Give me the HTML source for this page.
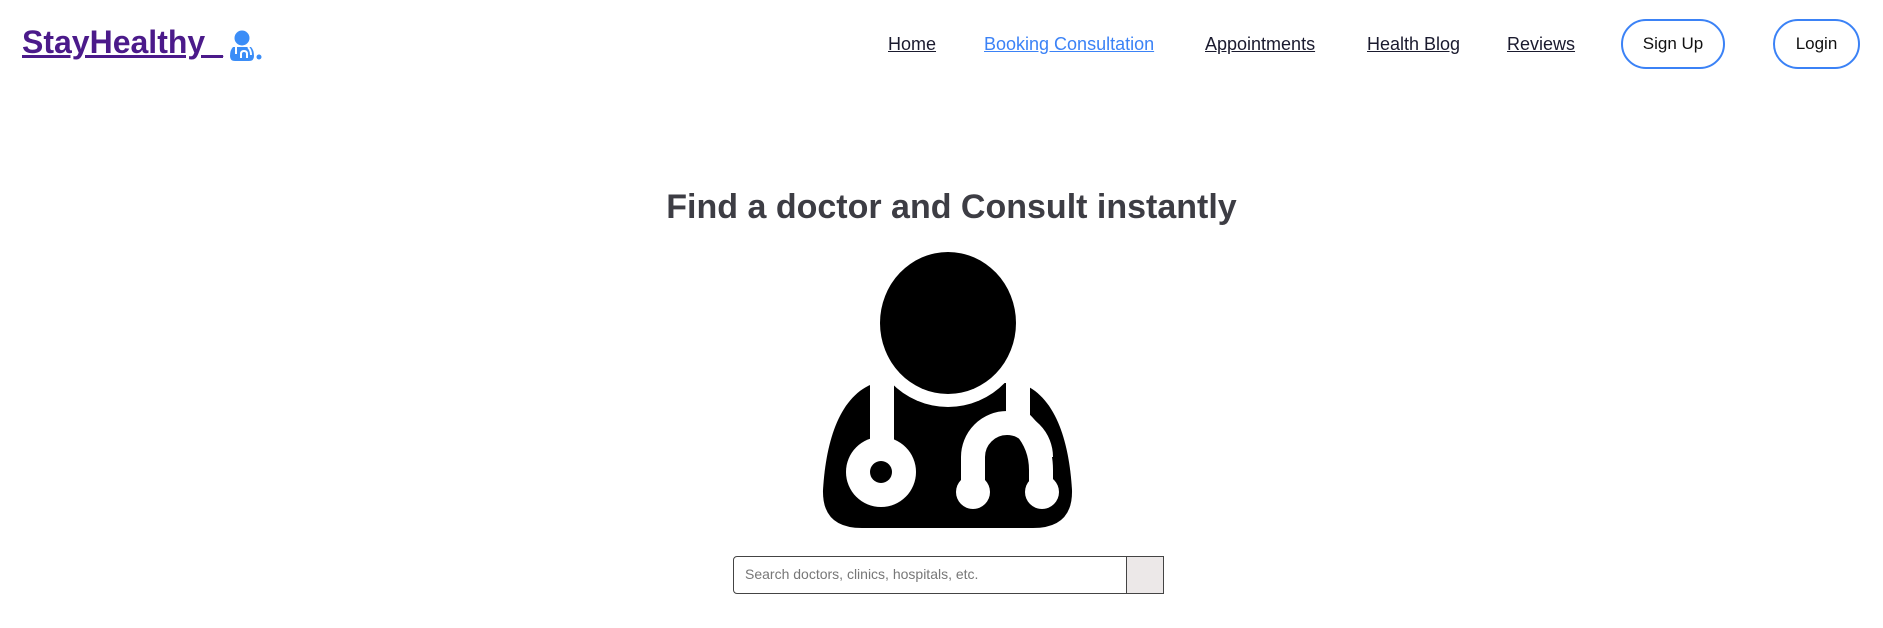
<!DOCTYPE html>
<html><head><meta charset="utf-8"><style>
body{margin:0;width:1883px;height:628px;background:#fff;font-family:"Liberation Sans",sans-serif;position:relative;overflow:hidden}
a{position:absolute;text-decoration:underline;color:#1a1a2e;font-size:18px;white-space:nowrap}
.logo{left:22px;top:24px;font-size:32px;color:#4b1a8a;font-weight:bold;letter-spacing:0px}
.btn{position:absolute;top:19px;height:50px;border:2px solid #3b82f6;border-radius:26px;box-sizing:border-box;font-size:17px;color:#111;display:flex;align-items:center;justify-content:center}
h1{position:absolute;left:10px;width:1883px;top:188px;margin:0;text-align:center;font-size:34px;color:#3d3d44;font-weight:bold}
.inp{position:absolute;left:733px;top:556px;width:394px;height:38px;border:1.5px solid #444;border-radius:4px 0 0 4px;box-sizing:border-box;font-size:14px;color:#777;padding-left:11px;line-height:35px}
.sb{position:absolute;left:1126px;top:556px;width:38px;height:38px;border:1.5px solid #444;background:#ece8e8;box-sizing:border-box}
</style></head><body>
<a class="logo">StayHealthy_</a>
<svg style="position:absolute;left:228px;top:30px" width="34" height="32" viewBox="0 0 34 32">
<circle cx="14" cy="8" r="7.5" fill="#3b8df7"/>
<path d="M5,17 Q2,20 2,26 Q2,31 7,31 L21,31 Q26,31 26,26 Q26,20 23,17 Z" fill="#3b8df7"/>
<path d="M8,17 L8,24 M20,17 Q23,20 23,25 M13,28 L13,24 Q13,21 16,21 Q19,21 19,24 L19,28" stroke="#fff" stroke-width="2" fill="none"/>
<circle cx="31" cy="27" r="2.5" fill="#3b8df7"/>
</svg>
<a style="left:888px;top:34px">Home</a>
<a style="left:984px;top:34px;color:#3b82f6">Booking Consultation</a>
<a style="left:1205px;top:34px">Appointments</a>
<a style="left:1367px;top:34px">Health Blog</a>
<a style="left:1507px;top:34px">Reviews</a>
<div class="btn" style="left:1621px;width:104px">Sign Up</div>
<div class="btn" style="left:1773px;width:87px">Login</div>
<h1>Find a doctor and Consult instantly</h1>
<svg style="position:absolute;left:0;top:0" width="1883" height="628">
<path d="M875,383 C840,395 826,440 823,490 Q822,528 862,528 L1033,528 Q1073,528 1072,490 C1069,440 1055,395 1020,383 Z" fill="#000"/>
<ellipse cx="948" cy="323" rx="81" ry="84" fill="#fff"/>
<ellipse cx="948" cy="323" rx="68" ry="71" fill="#000"/>
<g stroke="#fff" stroke-width="24" fill="none" stroke-linecap="butt">
<path d="M882,383 L882,450"/>
<path d="M1018,383 L1018,420 Q1041,440 1041,470 L1041,492"/>
<path d="M973,492 L973,457 A34,34 0 0 1 1041,457"/>
</g>
<circle cx="881" cy="472" r="35" fill="#fff"/>
<circle cx="881" cy="472" r="11" fill="#000"/>
<circle cx="973" cy="492" r="17" fill="#fff"/>
<circle cx="1042" cy="492" r="17" fill="#fff"/>
</svg>
<div class="inp">Search doctors, clinics, hospitals, etc.</div>
<div class="sb"></div>
</body></html>
